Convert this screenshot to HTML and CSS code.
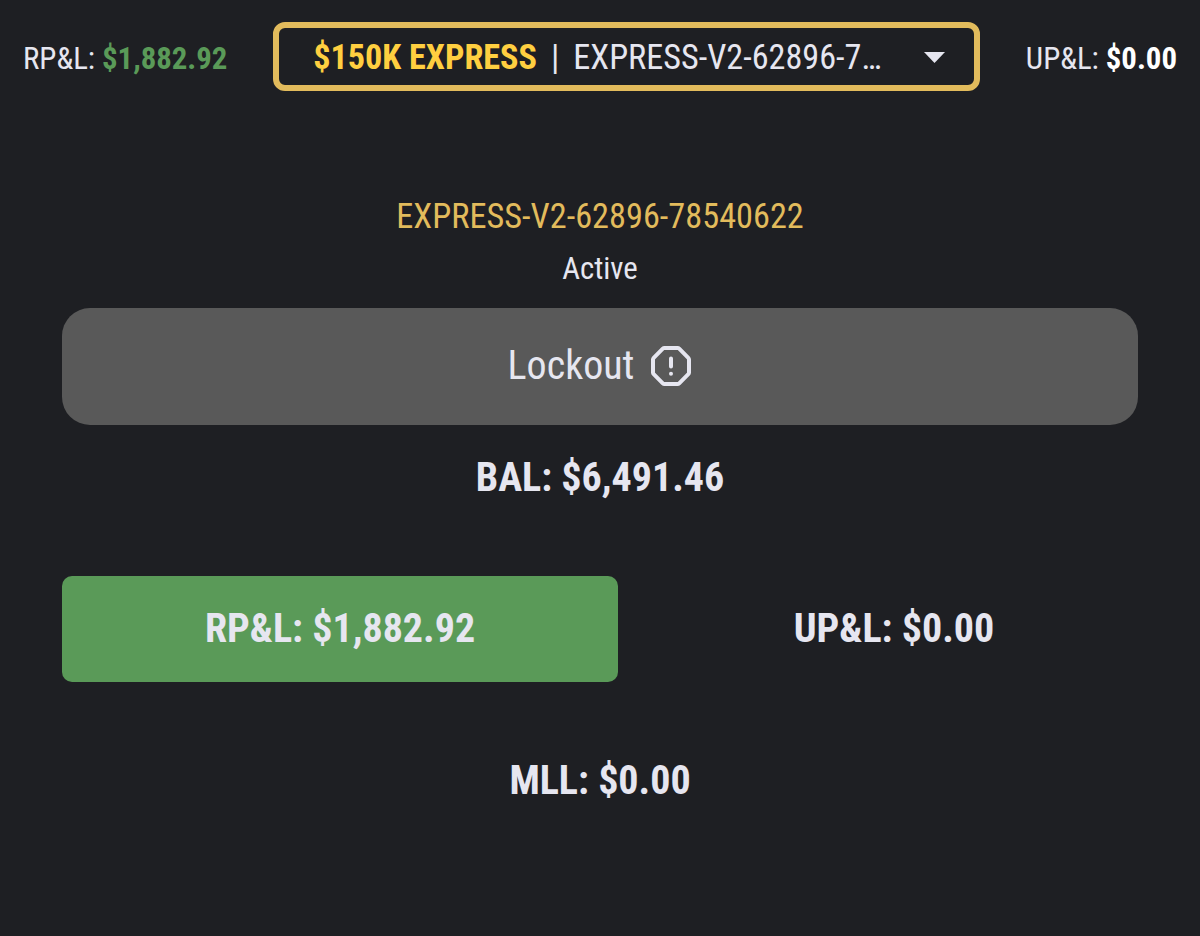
FILE: index.html
```html
<!DOCTYPE html>
<html lang="en">

<head>
    <meta charset="UTF-8">
    <meta name="viewport" content="width=device-width, initial-scale=1.0">
    <title>Account</title>
    <link rel="stylesheet" href="styles.css">
</head>

<body>
    <header class="top-bar">
        <div class="pnl"><span>RP&amp;L:</span><b class="rpnl-value">$1,882.92</b></div>
        <button class="account-select">
            <b class="account-size">$150K EXPRESS</b>
            <span class="divider">|</span>
            <span class="account-name">EXPRESS-V2-62896-7…</span>
            <svg class="arrow" viewBox="0 0 21 11"><path d="M0 0h21L10.500 11z"/></svg>
        </button>
        <div class="pnl"><span>UP&amp;L:</span><b class="upnl-value">$0.00</b></div>
    </header>

    <main class="account">
        <h1 class="account-id">EXPRESS-V2-62896-78540622</h1>
        <p class="status">Active</p>
        <button class="lockout-btn">
            <span>Lockout</span>
            <svg class="alert-icon" viewBox="0 0 42 42">
                <path d="M14.500 3h13q1 0 1.700.7l9.100 9.100q.7.7.7 1.700v13q0 1-.7 1.700l-9.100 9.100q-.7.7-1.700.7h-13q-1 0-1.700-.7l-9.100-9.100q-.7-.7-.7-1.700v-13q0-1 .7-1.700l9.100-9.100q.7-.7 1.700-.7z"/>
                <path d="M21 13.500v8M21 28.700v.1"/>
            </svg>
        </button>
        <p class="balance">BAL: $6,491.46</p>
        <div class="pnl-row">
            <div class="pnl-box positive">RP&amp;L: $1,882.92</div>
            <div class="pnl-box">UP&amp;L: $0.00</div>
        </div>
        <p class="mll">MLL: $0.00</p>
    </main>
</body>

</html>
```
FILE: styles.css
```css
* {
    margin: 0;
    padding: 0;
    box-sizing: border-box;
}

body {
    background-color: #1e1f23;
    color: #e6e6f0;
    font-family: "Roboto Condensed", Roboto, sans-serif;
    font-stretch: 75%;
    height: 936px;
    overflow: hidden;
}

button {
    font: inherit;
    font-stretch: inherit;
    color: inherit;
    border: none;
}

/* Top bar */
.top-bar {
    display: flex;
    justify-content: space-between;
    align-items: center;
    height: 69px;
    margin: 22px 23px 0;
    font-size: 30.8px;
}

.pnl {
    display: flex;
    gap: 7px;
    padding-top: 3px;
}

.rpnl-value {
    color: #5a9a58;
}

.upnl-value {
    color: #fff;
}

.account-select {
    display: flex;
    align-items: center;
    width: 707px;
    height: 69px;
    padding: 0 29px 0 34px;
    background: none;
    border: 6px solid #e2bb5c;
    border-radius: 12px;
    font-size: 34.2px;
}

.account-size {
    color: #ffcf40;
}

.divider {
    margin: 0 14px;
}

.arrow {
    width: 21px;
    height: 11px;
    margin-top: 1px;
    margin-left: auto;
    fill: #e6e6f0;
}

/* Account details */
.account {
    padding: 0 62px;
    text-align: center;
}

.account-id {
    margin-top: 105px;
    color: #e2bb5c;
    font-size: 34.3px;
    font-weight: 400;
    line-height: 40px;
}

.status {
    margin-top: 15px;
    font-size: 30.8px;
    line-height: 36px;
}

.lockout-btn {
    display: flex;
    justify-content: center;
    align-items: center;
    gap: 16px;
    width: 100%;
    height: 117px;
    margin-top: 21px;
    padding-bottom: 2px;
    background-color: #595959;
    border-radius: 28px;
    font-size: 40px;
}

.alert-icon {
    width: 42px;
    height: 42px;
    fill: none;
    stroke: #e6e6f0;
    stroke-width: 4;
    stroke-linecap: round;
}

.balance,
.pnl-box,
.mll {
    font-size: 40px;
    font-weight: 700;
}

.balance {
    margin-top: 29px;
    line-height: 48px;
}

.pnl-row {
    display: flex;
    gap: 32px;
    margin-top: 74px;
}

.pnl-box {
    display: flex;
    flex: 1;
    justify-content: center;
    align-items: center;
    height: 106px;
    padding-bottom: 1px;
    border-radius: 10px;
}

.positive {
    flex: 0 0 556px;
    background-color: #5a9a58;
}

.mll {
    margin-top: 75px;
    line-height: 48px;
}
```
